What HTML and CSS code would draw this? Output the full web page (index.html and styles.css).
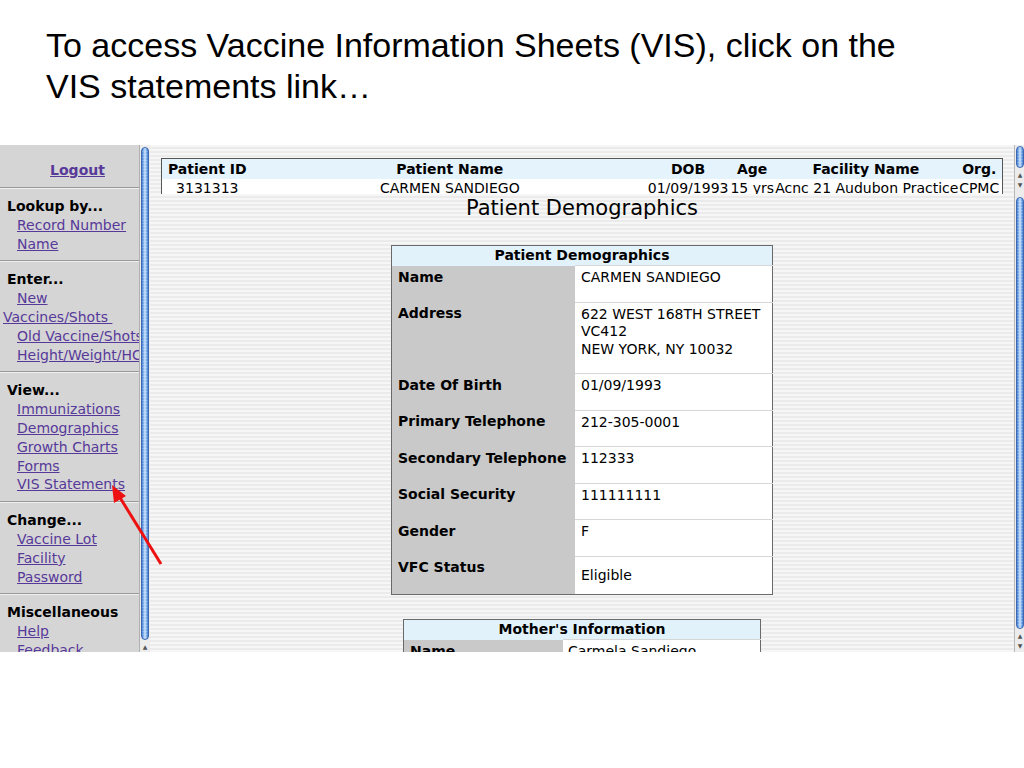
FILE: index.html
```html
<!DOCTYPE html>
<html>
<head>
<meta charset="utf-8">
<title>VIS statements</title>
<link rel="stylesheet" href="styles.css">
</head>
<body>
<div class="slide">
  <p class="title">To access Vaccine Information Sheets (VIS), click on the<br>VIS statements link…</p>
  <div class="screen">
    <nav class="sidebar">
      <div class="sideinner">
        <div class="logout"><a href="#">Logout</a></div>
        <div class="section">
          <div class="head">Lookup by...</div>
          <div class="item"><a href="#">Record Number</a></div>
          <div class="item"><a href="#">Name</a></div>
        </div>
        <div class="section">
          <div class="head">Enter...</div>
          <div class="item wrap"><a href="#">New Vaccines/Shots&nbsp;</a></div>
          <div class="item"><a href="#">Old Vaccine/Shots</a></div>
          <div class="item"><a href="#">Height/Weight/HC</a></div>
        </div>
        <div class="section">
          <div class="head">View...</div>
          <div class="item"><a href="#">Immunizations</a></div>
          <div class="item"><a href="#">Demographics</a></div>
          <div class="item"><a href="#">Growth Charts</a></div>
          <div class="item"><a href="#">Forms</a></div>
          <div class="item"><a href="#">VIS Statements</a></div>
        </div>
        <div class="section">
          <div class="head">Change...</div>
          <div class="item"><a href="#">Vaccine Lot</a></div>
          <div class="item"><a href="#">Facility</a></div>
          <div class="item"><a href="#">Password</a></div>
        </div>
        <div class="section last">
          <div class="head">Miscellaneous</div>
          <div class="item"><a href="#">Help</a></div>
          <div class="item"><a href="#">Feedback</a></div>
        </div>
      </div>
    </nav>
    <div class="vscroll left">
      <div class="thumb"></div>
      <div class="arrows"><span>▲</span></div>
    </div>
    <div class="frames">
      <div class="frame top">
        <div class="content">
          <table class="ptable">
            <colgroup><col class="c1"><col class="c2"><col class="c3"><col class="c4"><col class="c5"><col class="c6"></colgroup>
            <tr class="hrow"><th>Patient ID</th><th>Patient Name</th><th>DOB</th><th>Age</th><th>Facility Name</th><th>Org.</th></tr>
            <tr><td>3131313</td><td>CARMEN SANDIEGO</td><td>01/09/1993</td><td>15 yrs</td><td>Acnc 21 Audubon Practice</td><td>CPMC</td></tr>
          </table>
        </div>
        <div class="vscroll small">
          <div class="thumb"></div>
          <div class="arrows"><span>▲</span><span>▼</span></div>
        </div>
      </div>
      <div class="frame bottom">
        <div class="content">
          <h2 class="pagehead">Patient Demographics</h2>
          <table class="info demo">
            <tr><th colspan="2">Patient Demographics</th></tr>
            <tr><td class="lab">Name</td><td class="val">CARMEN SANDIEGO</td></tr>
            <tr><td class="lab">Address</td><td class="val">622 WEST 168TH STREET<br>VC412<br>NEW YORK, NY 10032</td></tr>
            <tr><td class="lab">Date Of Birth</td><td class="val">01/09/1993</td></tr>
            <tr><td class="lab">Primary Telephone</td><td class="val">212-305-0001</td></tr>
            <tr><td class="lab">Secondary Telephone</td><td class="val">112333</td></tr>
            <tr><td class="lab">Social Security</td><td class="val">111111111</td></tr>
            <tr><td class="lab">Gender</td><td class="val">F</td></tr>
            <tr><td class="lab">VFC Status</td><td class="val mid">Eligible</td></tr>
          </table>
          <table class="info mother">
            <tr><th colspan="2">Mother's Information</th></tr>
            <tr><td class="lab">Name</td><td class="val">Carmela Sandiego</td></tr>
          </table>
        </div>
        <div class="vscroll big">
          <div class="thumb"></div>
          <div class="arrows"><span>▲</span><span>▼</span></div>
        </div>
      </div>
    </div>
  </div>
  <svg class="pointer" width="70" height="100" viewBox="100 475 70 100" aria-hidden="true">
    <line x1="161" y1="564" x2="119" y2="496" stroke="#ee1111" stroke-width="3"/>
    <polygon points="112,485 126,496 114,503" fill="#ee1111"/>
  </svg>
</div>
</body>
</html>
```

FILE: styles.css
```css
html, body {
  margin: 0;
  padding: 0;
  background: #ffffff;
}

.slide {
  position: relative;
  width: 1024px;
  height: 768px;
  overflow: hidden;
}

.title {
  margin: 0;
  padding: 25px 0 0 46px;
  font-family: "Liberation Sans", Arial, sans-serif;
  font-size: 34px;
  line-height: 41px;
  color: #000;
}

.screen {
  margin-top: 38px;
  height: 507px;
  display: flex;
  overflow: hidden;
  font-family: "DejaVu Sans", Verdana, sans-serif;
  font-size: 14px;
  color: #000;
}

/* ---------- sidebar ---------- */
.sidebar {
  width: 139px;
  flex: none;
  background: #d5d5d5;
  overflow: hidden;
}

.sideinner {
  width: 155px;
}

.sidebar a {
  color: #57399a;
  text-decoration: underline;
}

.logout {
  width: 155px;
  height: 43px;
  line-height: 18px;
  padding-top: 16px;
  box-sizing: border-box;
  text-align: center;
  font-weight: bold;
  border-bottom: 1px solid #9a9a9a;
  box-shadow: 0 1px 0 #efefef;
}

.section {
  width: 139px;
  padding: 9px 0 7px 3px;
  box-sizing: border-box;
  border-bottom: 1px solid #9a9a9a;
  box-shadow: 0 1px 0 #efefef;
  line-height: 18.8px;
}

.section.last {
  border-bottom: none;
  box-shadow: none;
}

.head {
  font-weight: bold;
  padding-left: 4px;
}

.item {
  text-indent: 14px;
  white-space: nowrap;
}

.item.wrap {
  white-space: normal;
}

/* ---------- aqua scrollbars ---------- */
.vscroll {
  flex: none;
  display: flex;
  flex-direction: column;
  background: #ececec;
  box-sizing: border-box;
}

.vscroll.left {
  width: 11px;
  padding: 2px 1px 0 1px;
  border-left: 1px solid #b0b0b0;
}

.vscroll.small,
.vscroll.big {
  width: 10px;
  padding: 1px 0 1px 1px;
  border-left: 1px solid #b8b8b8;
}

.thumb {
  flex: 1;
  border: 1px solid #3b68b0;
  border-radius: 6px;
  background:
    repeating-linear-gradient(to bottom, rgba(255,255,255,0.18) 0 1px, rgba(255,255,255,0) 1px 3px),
    linear-gradient(to right, #3f78cf 0%, #8dbbf0 30%, #cfe3fb 50%, #7fb0ec 75%, #3c73c8 100%);
}

.vscroll.small .thumb {
  flex: none;
  height: 20px;
}

.vscroll.big .thumb {
  margin-top: 2px;
}

.arrows {
  flex: none;
  display: flex;
  flex-direction: column;
  align-items: center;
  font-size: 6px;
  line-height: 10px;
  color: #555;
  padding-top: 2px;
}

.vscroll.left .arrows {
  height: 10px;
}

/* ---------- frames ---------- */
.frames {
  flex: 1;
  display: flex;
  flex-direction: column;
}

.frame {
  display: flex;
  overflow: hidden;
}

.frame.top {
  height: 49px;
  flex: none;
}

.frame.bottom {
  flex: 1;
}

.content {
  flex: 1;
  overflow: hidden;
  background: repeating-linear-gradient(to bottom, #f6f6f6 0 2px, #ebebeb 2px 4px);
}

.frame.top .content {
  padding: 13px 0 0 11px;
}

/* patient header table */
.ptable {
  width: 842px;
  table-layout: fixed;
  border-collapse: collapse;
  border: 1px solid #555;
  border-bottom: none;
  background: #fff;
  line-height: 18px;
}

.ptable col.c1 { width: 91px; }
.ptable col.c2 { width: 394px; }
.ptable col.c3 { width: 82px; }
.ptable col.c4 { width: 46px; }
.ptable col.c5 { width: 181px; }
.ptable col.c6 { width: 46px; }

.ptable th,
.ptable td {
  padding: 0;
  text-align: center;
  white-space: nowrap;
  overflow: visible;
}

.ptable .hrow {
  background: #e4f3fc;
}

.ptable th {
  font-weight: bold;
  height: 20px;
}

/* main page */
.pagehead {
  margin: 2px 0 25px;
  font-weight: normal;
  font-size: 21px;
  line-height: 24px;
  text-align: center;
}

.info {
  margin: 0 auto;
  border-collapse: collapse;
  border: 1px solid #6a6a6a;
  line-height: 17.5px;
}

.info th {
  background: #e2f2fb;
  font-weight: bold;
  height: 19px;
  padding: 0;
  line-height: 19px;
}

.info td {
  vertical-align: top;
  padding: 3px 6px 15px 6px;
}

.info td.lab {
  background: #c9c9c9;
  font-weight: bold;
}

.info td.val {
  background: #fff;
  border-top: 1px solid #d6d6d6;
}

.info td.val.mid {
  vertical-align: middle;
  padding-top: 10px;
  padding-bottom: 10px;
}

.demo {
  width: 382px;
  margin-bottom: 24px;
}

.demo td.lab { width: 171px; }

.mother {
  width: 358px;
}

.mother td.lab { width: 147px; }
.mother td.val { padding-left: 5px; }

/* annotation arrow */
.pointer {
  position: absolute;
  left: 100px;
  top: 475px;
  pointer-events: none;
}
```
